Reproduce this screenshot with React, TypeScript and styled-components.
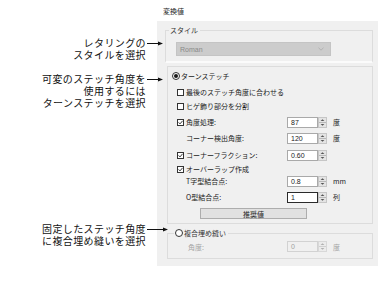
import React from "react";
import styled, { createGlobalStyle } from "styled-components";

const GlobalStyle = createGlobalStyle`
  html, body {
    margin: 0;
    padding: 0;
    background: #ffffff;
  }
  body {
    font-family: "Noto Sans CJK JP", "Noto Sans", sans-serif;
  }
`;

const Page = styled.div`
  display: flex;
  width: 378px;
  height: 284px;
  overflow: hidden;
`;

/* left column: callout notes with arrows */
const Notes = styled.div`
  flex: none;
  width: 157px;
  display: flex;
  flex-direction: column;
  padding-top: 37px;
  box-sizing: border-box;
`;

const Note = styled.div<{ $mt: number }>`
  display: flex;
  justify-content: flex-end;
  align-items: flex-start;
  margin-top: ${(p) => p.$mt}px;
`;

const NoteText = styled.div`
  font-size: 10px;
  line-height: 12px;
  letter-spacing: 0.4px;
  text-align: right;
  color: #111;
  white-space: nowrap;
`;

const Pointer = styled.svg<{ $reach: number }>`
  flex: none;
  display: block;
  margin-top: 4px;
  margin-left: 1px;
  margin-right: -${(p) => p.$reach}px;
  position: relative;
  z-index: 1;
`;

const Arrow = ({ len, reach }: { len: number; reach: number }) => (
  <Pointer $reach={reach} width={len} height={5} viewBox={`0 0 ${len} 5`}>
    <line x1={0} y1={2.5} x2={len - 4} y2={2.5} stroke="#111" strokeWidth={1} />
    <path d={`M${len - 5} 0.6 L${len} 2.5 L${len - 5} 4.4 Z`} fill="#111" />
  </Pointer>
);

/* right column: the dialog */
const Dialog = styled.div`
  flex: 1;
  display: flex;
  flex-direction: column;
`;

const Title = styled.div`
  height: 21px;
  display: flex;
  align-items: center;
  padding-left: 6px;
  font-size: 7px;
  color: #222;
`;

const Panel = styled.div`
  background: #f0f0f0;
  padding: 4px 5px 7px 8px;
  display: flex;
  flex-direction: column;
`;

const Group = styled.fieldset<{ $inset: number; $mt: number }>`
  margin: ${(p) => p.$mt}px 0 0 ${(p) => p.$inset}px;
  padding: 0;
  min-width: 0;
  border: 1px solid #dcdcdc;
`;

const StyleGroup = styled(Group)`
  border-bottom: 2px solid #fbfbfb;
`;

const Legend = styled.legend<{ $ml: number }>`
  margin-left: ${(p) => p.$ml}px;
  padding: 0 2px 0 1px;
  font-size: 7px;
  line-height: 10px;
  height: 10px;
  color: #333;
  display: flex;
  align-items: center;
`;

const GroupBody = styled.div<{ $pad: string }>`
  padding: ${(p) => p.$pad};
  display: flex;
  flex-direction: column;
`;

const Box = styled.div`
  margin: 3px 0 0 2px;
  border: 1px solid #dcdcdc;
  padding: 4px 0 4px 4px;
  display: flex;
  flex-direction: column;
`;

const Combo = styled.div`
  width: 155px;
  height: 14px;
  box-sizing: border-box;
  background: #cccccc;
  border: 1px solid #c4c4c4;
  display: flex;
  align-items: center;
  justify-content: space-between;
  padding: 0 6px 0 3px;
  font-family: "Liberation Sans", Arial, sans-serif;
  font-size: 7px;
  color: #8a8a8a;
`;

const Row = styled.div<{ $h: number; $mt: number }>`
  display: flex;
  align-items: center;
  height: ${(p) => p.$h}px;
  margin-top: ${(p) => p.$mt}px;
  font-size: 7px;
  color: #1a1a1a;
  white-space: nowrap;
`;

const Label = styled.div<{ $indent: number; $off?: boolean }>`
  flex: none;
  width: 115px;
  box-sizing: border-box;
  padding-left: ${(p) => p.$indent}px;
  display: flex;
  align-items: center;
  color: ${(p) => (p.$off ? "#a3a3a3" : "#1a1a1a")};
`;

const Mark = styled.svg`
  flex: none;
  display: block;
  margin-right: 1px;
`;

const Field = styled.div<{ $focus?: boolean; $off?: boolean }>`
  flex: none;
  width: 31px;
  height: 11px;
  box-sizing: border-box;
  padding-left: 3px;
  display: flex;
  align-items: center;
  background: ${(p) => (p.$off ? "#f0f0f0" : "#ffffff")};
  border: 1px solid
    ${(p) => (p.$focus ? "#2a2a2a" : p.$off ? "#d2d2d2" : "#a9a9a9")};
  font-family: "Liberation Sans", Arial, sans-serif;
  font-size: 7px;
  color: ${(p) => (p.$off ? "#a0a0a0" : "#1a1a1a")};
`;

const Unit = styled.span<{ $off?: boolean }>`
  margin-left: 5px;
  font-size: 7px;
  color: ${(p) => (p.$off ? "#a3a3a3" : "#1a1a1a")};
`;

const Button = styled.div`
  margin: 5px 0 0 28px;
  width: 107px;
  height: 11px;
  box-sizing: border-box;
  background: #e1e1e1;
  border: 1px solid #adadad;
  display: flex;
  align-items: center;
  justify-content: center;
  font-size: 7px;
  color: #1a1a1a;
`;

const Check = ({ on }: { on?: boolean }) => (
  <Mark width={7} height={7} viewBox="0 0 7 7" style={{ marginRight: 2 }}>
    <rect x={0.5} y={0.5} width={6} height={6} fill="#fff" stroke="#333" />
    {on && (
      <path d="M1.6 3.4 L3 4.9 L5.6 1.8" fill="none" stroke="#222" strokeWidth={0.9} />
    )}
  </Mark>
);

const Radio = ({ on }: { on?: boolean }) => (
  <Mark width={8} height={8} viewBox="0 0 8 8" style={{ marginRight: 1 }}>
    <circle cx={4} cy={4} r={3.5} fill="#fff" stroke="#333" />
    {on && <circle cx={4} cy={4} r={2} fill="#1a1a1a" />}
  </Mark>
);

const Spin = ({ off }: { off?: boolean }) => (
  <Mark width={9} height={11} viewBox="0 0 9 11">
    <rect x={0.5} y={0.5} width={8} height={10} fill={off ? "#ececec" : "#e4e4e4"} stroke={off ? "#d8d8d8" : "#c6c6c6"} />
    <line x1={1} y1={5.5} x2={8} y2={5.5} stroke={off ? "#d0d0d0" : "#b8b8b8"} />
    <path d="M2.6 4 L4.5 2.2 L6.4 4 Z" fill={off ? "#b0b0b0" : "#555"} />
    <path d="M2.6 7 L4.5 8.8 L6.4 7 Z" fill={off ? "#b0b0b0" : "#555"} />
  </Mark>
);

const Chevron = () => (
  <svg width={6} height={4} viewBox="0 0 6 4">
    <path d="M0.5 0.8 L3 3.2 L5.5 0.8" fill="none" stroke="#a9a9a9" strokeWidth={0.8} />
  </svg>
);

const notes = [
  { mt: 0, lines: ["レタリングの", "スタイルを選択"], len: 16, reach: 6 },
  { mt: 12, lines: ["可変のステッチ角度を", "使用するには", "ターンステッチを選択"], len: 16, reach: 6 },
  { mt: 114, lines: ["固定したステッチ角度", "に複合埋め縫いを選択"], len: 21, reach: 11 },
];

export default function App() {
  return (
    <>
      <GlobalStyle />
      <Page>
        <Notes>
          {notes.map((n) => (
            <Note key={n.lines[0]} $mt={n.mt}>
              <NoteText>
                {n.lines.map((l) => (
                  <div key={l}>{l}</div>
                ))}
              </NoteText>
              <Arrow len={n.len} reach={n.reach} />
            </Note>
          ))}
        </Notes>

        <Dialog>
          <Title>変換値</Title>
          <Panel>
            <StyleGroup $inset={0} $mt={0}>
              <Legend $ml={3}>スタイル</Legend>
              <GroupBody $pad="7px 0 5px 10px">
                <Combo>
                  <span>Roman</span>
                  <Chevron />
                </Combo>
              </GroupBody>
            </StyleGroup>

            <Box>
              <Row $h={10} $mt={0}>
                <Label $indent={0}>
                  <Radio on />
                  ターンステッチ
                </Label>
              </Row>
              <Row $h={10} $mt={6}>
                <Label $indent={5}>
                  <Check />
                  最後のステッチ角度に合わせる
                </Label>
              </Row>
              <Row $h={10} $mt={4}>
                <Label $indent={5}>
                  <Check />
                  ヒゲ飾り部分を分割
                </Label>
              </Row>
              <Row $h={12} $mt={5}>
                <Label $indent={5}>
                  <Check on />
                  角度処理:
                </Label>
                <Field>87</Field>
                <Spin />
                <Unit>度</Unit>
              </Row>
              <Row $h={12} $mt={4}>
                <Label $indent={14}>コーナー検出角度:</Label>
                <Field>120</Field>
                <Spin />
                <Unit>度</Unit>
              </Row>
              <Row $h={12} $mt={5}>
                <Label $indent={5}>
                  <Check on />
                  コーナーフラクション:
                </Label>
                <Field>0.60</Field>
                <Spin />
              </Row>
              <Row $h={10} $mt={3}>
                <Label $indent={5}>
                  <Check on />
                  オーバーラップ作成
                </Label>
              </Row>
              <Row $h={12} $mt={1}>
                <Label $indent={14}>T字型結合点:</Label>
                <Field>0.8</Field>
                <Spin />
                <Unit>mm</Unit>
              </Row>
              <Row $h={12} $mt={4}>
                <Label $indent={14}>O型結合点:</Label>
                <Field $focus>1</Field>
                <Spin />
                <Unit>列</Unit>
              </Row>
              <Button>推奨値</Button>
            </Box>

            <Group $inset={2} $mt={4}>
              <Legend $ml={6}>
                <Radio />
                複合埋め縫い
              </Legend>
              <GroupBody $pad="3px 0 6px 4px">
                <Row $h={11} $mt={0}>
                  <Label $indent={16} $off>
                    角度:
                  </Label>
                  <Field $off>0</Field>
                  <Spin off />
                  <Unit $off>度</Unit>
                </Row>
              </GroupBody>
            </Group>
          </Panel>
        </Dialog>
      </Page>
    </>
  );
}
